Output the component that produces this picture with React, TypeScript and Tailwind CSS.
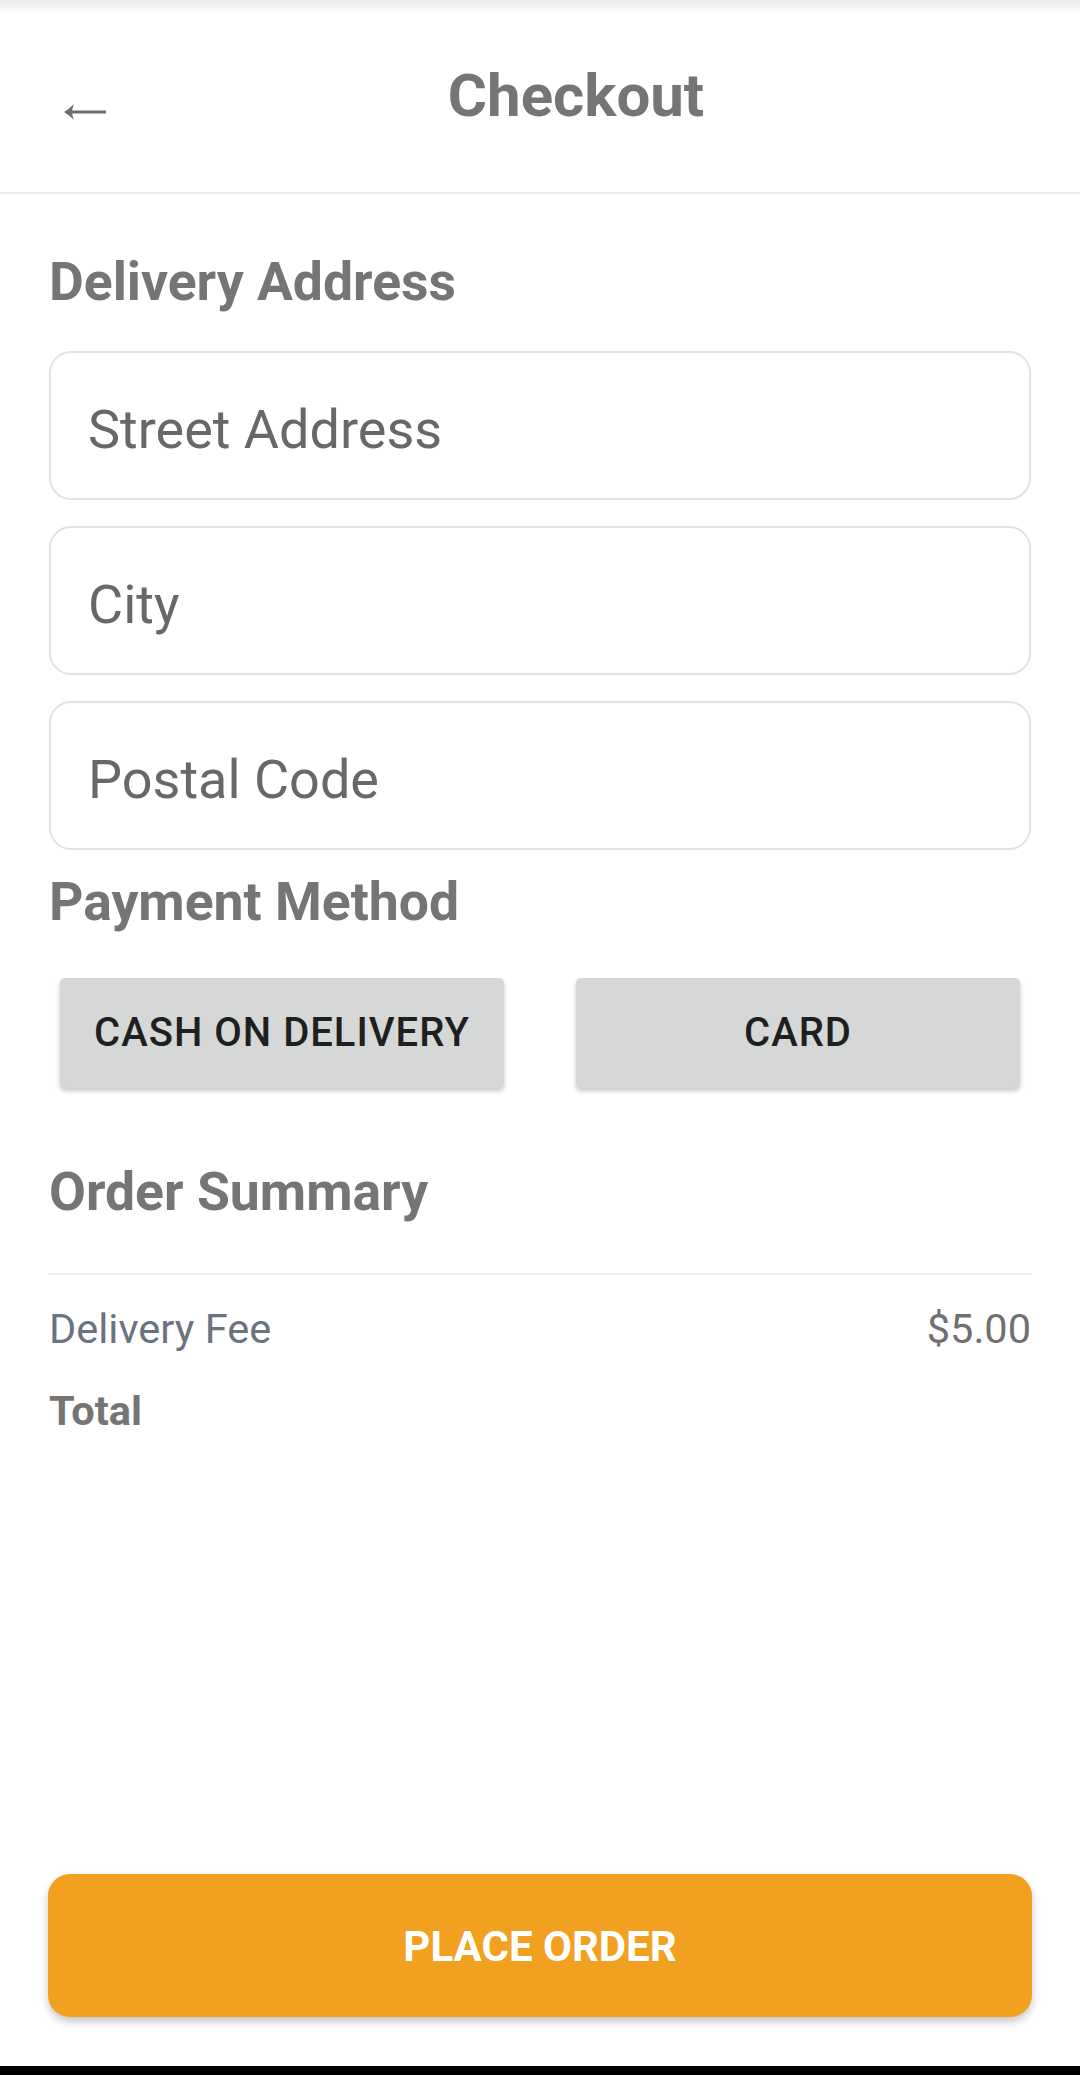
import React from 'react';

const fields = ['Street Address', 'City', 'Postal Code'];

const BackArrow = () => (
  <svg width="44" height="20" viewBox="0 0 44 20" className="block">
    <path d="M1 10 Q6 7 11 2 Q9 7 9 10 Q9 13 11 18 Q6 13 1 10 Z" fill="#6e6e6e" />
    <path d="M5 10 H43" stroke="#6e6e6e" strokeWidth="3" />
  </svg>
);

const SectionTitle = ({ children, className = '' }: { children: React.ReactNode; className?: string }) => (
  <h2 className={`text-[53.5px] leading-[62px] font-bold text-[#757575] ${className}`}>{children}</h2>
);

export default function App() {
  return (
    <div
      className="w-[1080px] h-[2075px] bg-white flex flex-col overflow-hidden"
      style={{ fontFamily: 'Roboto, "Noto Sans", sans-serif' }}
    >
      {/* header */}
      <div className="h-[194px] shrink-0 flex items-center border-b-2 border-[#ececec] bg-[linear-gradient(to_bottom,#e9e9e9_0px,#ffffff_14px)]">
        <button className="w-[108px] pl-[63px] mt-[31px] shrink-0">
          <BackArrow />
        </button>
        <h1 className="flex-1 pr-[36px] text-center text-[60px] leading-[70px] font-bold text-[#757575]">Checkout</h1>
      </div>

      <div className="px-[49px] flex flex-col">
        <SectionTitle className="mt-[57px]">Delivery Address</SectionTitle>

        <div className="mt-[38px] flex flex-col gap-[26px]">
          {fields.map((f) => (
            <input
              key={f}
              placeholder={f}
              className="h-[149px] w-full rounded-[22px] border-2 border-[#e2e2e2] pl-[37px] pt-[7px] text-[54px] text-[#555] placeholder:text-[#686868] outline-none"
            />
          ))}
        </div>

        <SectionTitle className="mt-[21px]">Payment Method</SectionTitle>

        <div className="mt-[45px] px-[11px] flex justify-between">
          <button className="w-[444px] h-[110px] rounded-[5px] bg-[#d6d7d7] shadow-[0_3px_5px_rgba(0,0,0,0.22)] text-[40px] tracking-[1px] font-medium text-[#1f1f1f] uppercase">
            Cash on Delivery
          </button>
          <button className="w-[444px] h-[110px] rounded-[5px] bg-[#d6d7d7] shadow-[0_3px_5px_rgba(0,0,0,0.22)] text-[40px] tracking-[1px] font-medium text-[#1f1f1f] uppercase">
            Card
          </button>
        </div>

        <SectionTitle className="mt-[73px]">Order Summary</SectionTitle>

        <div className="mt-[50px] h-[2px] bg-[#eeeeee]" />

        <div className="mt-[30px] flex justify-between text-[41.5px] leading-[48px]">
          <span className="text-[#6b7280]">Delivery Fee</span>
          <span className="text-[#707070]">$5.00</span>
        </div>
        <div className="mt-[34px] text-[41.5px] leading-[48px] font-bold text-[#757575]">Total</div>
      </div>

      <div className="mt-auto px-[48px] mb-[49px]">
        <button className="w-full h-[143px] rounded-[22px] bg-[#f2a01f] shadow-[0_5px_8px_rgba(0,0,0,0.22)] text-white text-[42px] font-bold pt-[2px]">
          PLACE ORDER
        </button>
      </div>
      <div className="h-[9px] bg-black shrink-0" />
    </div>
  );
}
